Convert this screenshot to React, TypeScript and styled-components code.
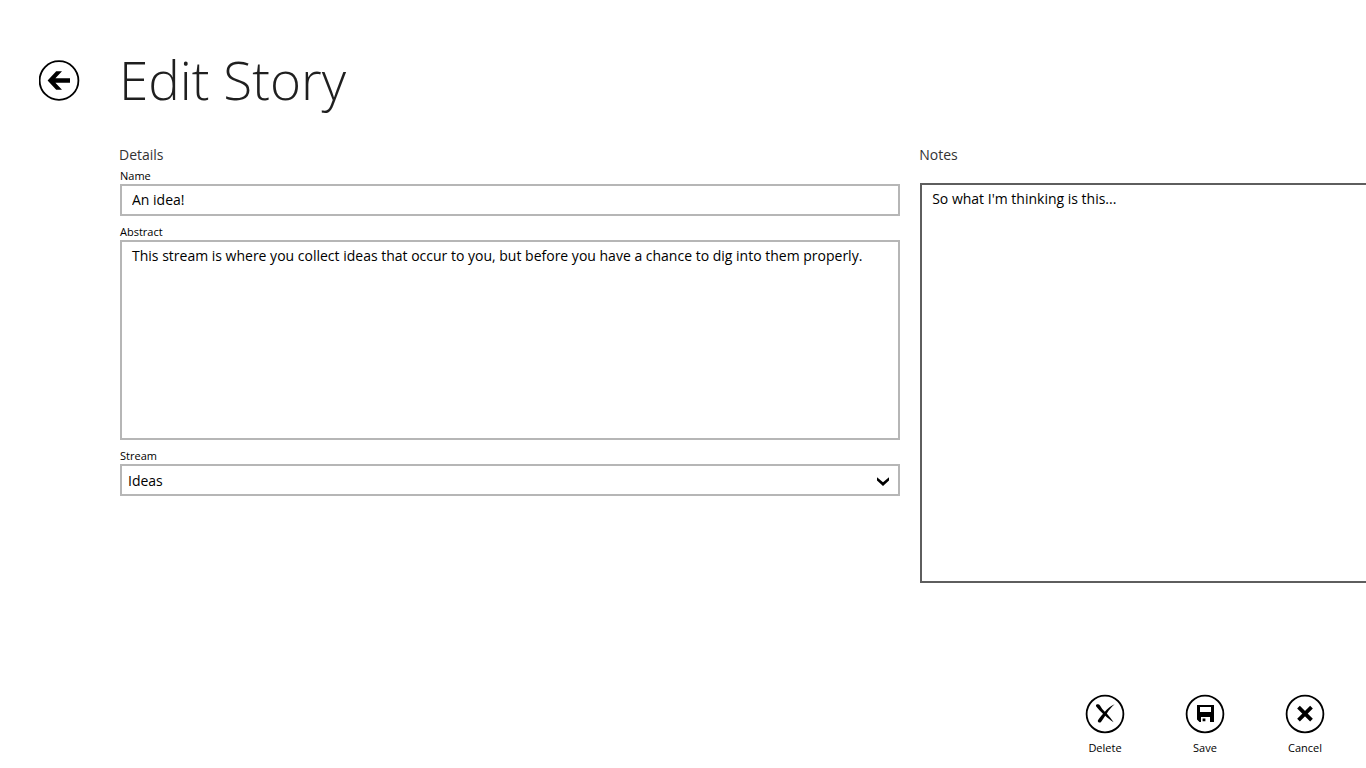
import React, { useState } from "react";
import styled, { createGlobalStyle, css } from "styled-components";

const GlobalStyle = createGlobalStyle`
  *, *::before, *::after { box-sizing: border-box; }
  body {
    margin: 0;
    background: #fff;
    color: #000;
    font-family: "Segoe UI", "Open Sans", "Noto Sans", sans-serif;
    font-size: 14px;
    line-height: 20px;
  }
`;

const Page = styled.div`
  display: flex;
  flex-direction: column;
  min-height: 100vh;
  overflow-x: hidden;
`;

const Header = styled.header`
  display: grid;
  grid-template-columns: 80px 1fr;
  align-items: center;
  padding: 40px 40px 0 39px;
`;

const BackButton = styled.button`
  width: 41px;
  height: 41px;
  padding: 0;
  border: 0;
  background: none;
  cursor: pointer;
`;

const Title = styled.h1`
  margin: 0;
  color: #1f1f1f;
  font-size: 53px;
  font-weight: 300;
  line-height: 80px;
`;

const Form = styled.form`
  display: flex;
  flex: 1;
  flex-direction: column;
`;

const Columns = styled.div`
  display: grid;
  grid-template-columns: minmax(0, 35fr) minmax(0, 20fr);
  gap: 20px;
  padding: 25px 0 24px 120px;
`;

const Section = styled.section<{ $gap: number }>`
  display: flex;
  flex-direction: column;
  gap: ${(p) => p.$gap}px;
`;

const SectionTitle = styled.h2`
  margin: 0 0 0 -1px;
  color: #333;
  font-size: 14px;
  font-weight: 400;
  line-height: 20px;
`;

const FieldList = styled.div`
  display: flex;
  flex-direction: column;
  gap: 8px;
`;

const Field = styled.div`
  display: flex;
  flex-direction: column;
`;

const Label = styled.label`
  font-size: 11px;
  line-height: 16px;
`;

const box = css`
  display: block;
  width: 100%;
  margin: 0;
  border: 2px solid #b6b6b6;
  border-radius: 0;
  outline: none;
  background: #fff;
  color: #000;
  font: inherit;
`;

const TextInput = styled.input`
  ${box}
  height: 32px;
  padding: 0 10px 2px;
`;

const TextArea = styled.textarea`
  ${box}
  height: 200px;
  padding: 4px 10px;
  resize: none;
`;

const NotesArea = styled(TextArea)`
  height: 400px;
  border-color: #5e5e5e;
  border-right: 0;
`;

const SelectWrap = styled.div`
  position: relative;
`;

const Select = styled.select`
  ${box}
  height: 32px;
  padding: 2px 32px 0 6px;
  appearance: none;
`;

const Chevron = styled.svg`
  position: absolute;
  top: 12px;
  right: 10px;
  pointer-events: none;
`;

const AppBar = styled.footer`
  display: flex;
  justify-content: flex-end;
  margin-top: auto;
  padding: 0 11px 12px;
`;

const Command = styled.button`
  display: flex;
  flex-direction: column;
  align-items: center;
  gap: 6px;
  width: 100px;
  padding: 0;
  border: 0;
  background: none;
  color: #000;
  font: inherit;
  font-size: 11px;
  line-height: 16px;
  cursor: pointer;
`;

const Ring = ({ children }: { children: React.ReactNode }) => (
  <svg width="40" height="40" viewBox="0 0 40 40" aria-hidden="true">
    <circle cx="20" cy="20" r="18.4" fill="none" stroke="#000" strokeWidth="1.8" />
    {children}
  </svg>
);

export default function App() {
  const [name, setName] = useState("An idea!");
  const [abstract, setAbstract] = useState(
    "This stream is where you collect ideas that occur to you, but before you have a chance to dig into them properly."
  );
  const [stream, setStream] = useState("Ideas");
  const [notes, setNotes] = useState("So what I'm thinking is this...");

  return (
    <Page>
      <GlobalStyle />
      <Header>
        <BackButton type="button" aria-label="Back">
          <svg width="41" height="41" viewBox="0 0 41 41" aria-hidden="true">
            <circle cx="20" cy="20.5" r="19.4" fill="none" stroke="#000" strokeWidth="1.8" />
            <path d="M8.6 20.5L17.2 11.3H23L16.4 18.3H31V22.7H16.4L23 29.7H17.2Z" />
          </svg>
        </BackButton>
        <Title>Edit Story</Title>
      </Header>
      <Form onSubmit={(e) => e.preventDefault()}>
        <Columns>
          <Section $gap={3}>
            <SectionTitle>Details</SectionTitle>
            <FieldList>
              <Field>
                <Label htmlFor="name">Name</Label>
                <TextInput id="name" value={name} onChange={(e) => setName(e.target.value)} />
              </Field>
              <Field>
                <Label htmlFor="abstract">Abstract</Label>
                <TextArea id="abstract" value={abstract} spellCheck={false} onChange={(e) => setAbstract(e.target.value)} />
              </Field>
              <Field>
                <Label htmlFor="stream">Stream</Label>
                <SelectWrap>
                  <Select id="stream" value={stream} onChange={(e) => setStream(e.target.value)}>
                    <option>Ideas</option>
                  </Select>
                  <Chevron width="14" height="11" viewBox="0 0 14 11" aria-hidden="true">
                    <path d="M1 1.2L7 6.2L13 1.2V4.4L7 10L1 4.4Z" />
                  </Chevron>
                </SelectWrap>
              </Field>
            </FieldList>
          </Section>
          <Section $gap={18}>
            <SectionTitle id="notes-title">Notes</SectionTitle>
            <NotesArea aria-labelledby="notes-title" value={notes} spellCheck={false} onChange={(e) => setNotes(e.target.value)} />
          </Section>
        </Columns>
        <AppBar>
          <Command type="button">
            <Ring>
              <path d="M11.6 10.6C12.8 9.8 14.2 10.2 15 11.4C16.4 13.8 18 16 19.8 17.8C22.6 14.4 25.4 12 29.6 10.2C26.6 12.8 24.2 15.6 21.8 19.4C24 22.2 26.2 24.6 28.6 28.2C25.4 26.2 22.8 24.2 20.2 21.8C18.8 24.2 17.4 26.2 16 28C15 29 13.2 28.6 12.8 27.2C12.6 26.2 15.4 23 18 19.8C15.6 17.4 13.2 14.8 11.2 12.4C10.8 11.8 11 11 11.6 10.6Z" />
            </Ring>
            Delete
          </Command>
          <Command type="submit">
            <Ring>
              <path fillRule="evenodd" d="M12 11H29V28H14.5L12 25.5ZM15 13V18H26V13ZM16 23V28H25V23ZM17.6 24.4H20.4V27.2H17.6Z" />
            </Ring>
            Save
          </Command>
          <Command type="button">
            <Ring>
              <path d="M13.5 13.2L26.5 26.2M26.5 13.2L13.5 26.2" stroke="#000" strokeWidth="3.8" />
            </Ring>
            Cancel
          </Command>
        </AppBar>
      </Form>
    </Page>
  );
}
